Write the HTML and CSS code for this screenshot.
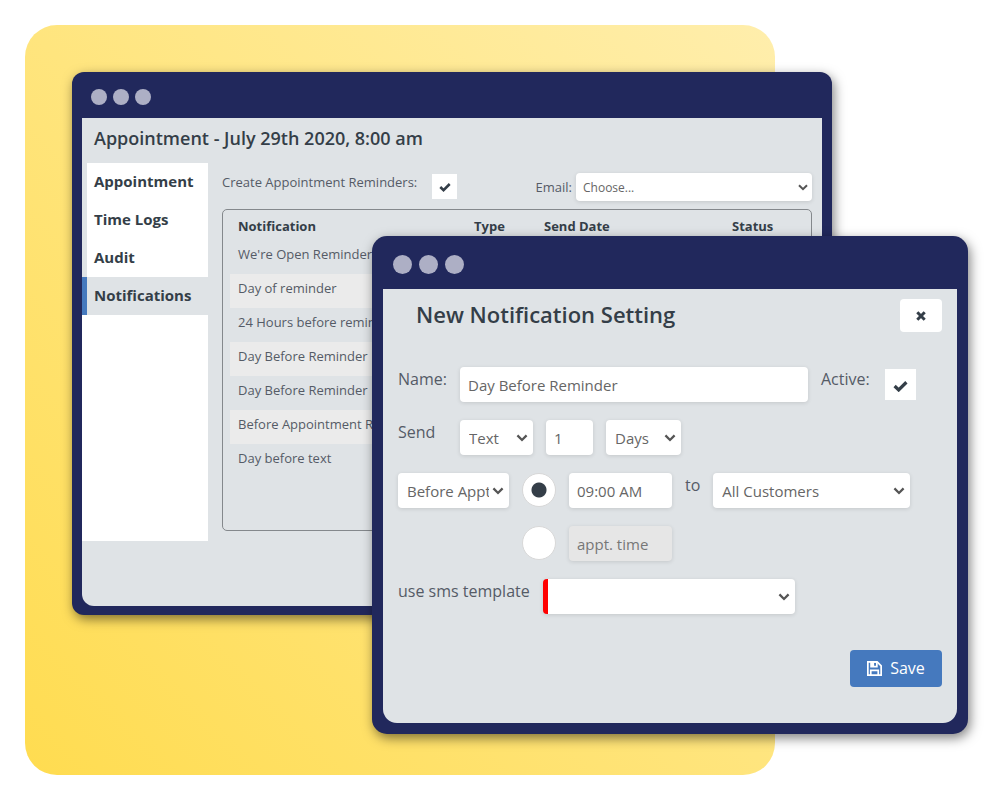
FILE: index.html
```html
<!DOCTYPE html>
<html lang="en">
<head>
  <meta charset="UTF-8">
  <title>Appointment Notifications</title>
  <meta name="viewport" content="width=device-width, initial-scale=1.0">
  <link rel="stylesheet" href="styles.css">
</head>
<body>
  <svg width="0" height="0" class="icon-defs" aria-hidden="true">
    <symbol id="chevron" viewBox="0 0 10 7"><path d="M1 1.2l4 4 4-4" fill="none" stroke="currentColor" stroke-width="2"/></symbol>
    <symbol id="check" viewBox="0 0 14 11"><path d="M1.5 5.5l3.8 3.7L12.5 2" fill="none" stroke="currentColor" stroke-width="3"/></symbol>
    <symbol id="times" viewBox="0 0 10 10"><path d="M1.3 1.3l7.4 7.4M8.7 1.3L1.3 8.7" fill="none" stroke="currentColor" stroke-width="3"/></symbol>
    <symbol id="floppy" viewBox="0 0 14 14">
      <path d="M.8.8h8.700l3.700 3.700v8.700H.8zM3.500 13V8.800h7V13" fill="none" stroke="currentColor" stroke-width="1.6"/>
      <path d="M3 1h7v5H3zM6.600 1.600v2.900h1.800V1.600z" fill="currentColor" fill-rule="evenodd"/>
    </symbol>
  </svg>

  <main class="stage">
    <div class="backdrop"></div>

    <section class="window window-back">
      <div class="window-bar"><span></span><span></span><span></span></div>
      <div class="window-body">
        <h1>Appointment - July 29th 2020, 8:00 am</h1>
        <div class="columns">
          <nav class="tabs">
            <a href="#appointment">Appointment</a>
            <a href="#timelogs">Time Logs</a>
            <a href="#audit">Audit</a>
            <a href="#notifications" class="active">Notifications</a>
            <div class="tabs-fill"></div>
          </nav>
          <div class="content">
            <div class="toolbar">
              <label for="createReminders">Create Appointment Reminders:</label>
              <span class="tick tick-small">
                <input type="checkbox" id="createReminders" checked>
                <svg><use href="#check"/></svg>
              </span>
              <label for="email" class="email-label">Email:</label>
              <span class="select select-email">
                <select id="email"><option>Choose...</option></select>
                <svg><use href="#chevron"/></svg>
              </span>
            </div>
            <div class="table-box">
              <table>
                <thead>
                  <tr><th class="col-name">Notification</th><th class="col-type">Type</th><th class="col-date">Send Date</th><th>Status</th></tr>
                </thead>
                <tbody>
                  <tr><td>We're Open Reminder</td><td></td><td></td><td></td></tr>
                  <tr><td>Day of reminder</td><td></td><td></td><td></td></tr>
                  <tr><td>24 Hours before reminder</td><td></td><td></td><td></td></tr>
                  <tr><td>Day Before Reminder</td><td></td><td></td><td></td></tr>
                  <tr><td>Day Before Reminder</td><td></td><td></td><td></td></tr>
                  <tr><td>Before Appointment R...</td><td></td><td></td><td></td></tr>
                  <tr><td>Day before text</td><td></td><td></td><td></td></tr>
                </tbody>
              </table>
            </div>
          </div>
        </div>
      </div>
    </section>

    <section class="window window-front">
      <div class="window-bar"><span></span><span></span><span></span></div>
      <form class="window-body">
        <div class="dialog-head">
          <h2>New Notification Setting</h2>
          <button type="button" class="close" aria-label="Close"><svg><use href="#times"/></svg></button>
        </div>
        <div class="row row-name">
          <label for="name">Name:</label>
          <input type="text" id="name" class="field grow" value="Day Before Reminder">
          <label for="active">Active:</label>
          <span class="tick">
            <input type="checkbox" id="active" checked>
            <svg><use href="#check"/></svg>
          </span>
        </div>
        <div class="row">
          <label for="sendType">Send</label>
          <span class="select select-type">
            <select id="sendType"><option>Text</option></select>
            <svg><use href="#chevron"/></svg>
          </span>
          <input type="text" class="field count" value="1" aria-label="Amount">
          <span class="select select-unit">
            <select aria-label="Unit"><option>Days</option></select>
            <svg><use href="#chevron"/></svg>
          </span>
        </div>
        <div class="row">
          <span class="select select-when">
            <select aria-label="When"><option>Before Appt</option></select>
            <svg><use href="#chevron"/></svg>
          </span>
          <input type="radio" name="at" aria-label="At a set time" checked>
          <input type="text" class="field time" value="09:00 AM" aria-label="Time">
          <label for="audience">to</label>
          <span class="select select-audience">
            <select id="audience"><option>All Customers</option></select>
            <svg><use href="#chevron"/></svg>
          </span>
        </div>
        <div class="row row-appt">
          <input type="radio" name="at" aria-label="At appointment time">
          <input type="text" class="field time" value="appt. time" aria-label="Appointment time" disabled>
        </div>
        <div class="row">
          <label for="template">use sms template</label>
          <span class="select select-template">
            <select id="template"><option></option></select>
            <svg><use href="#chevron"/></svg>
          </span>
        </div>
        <div class="dialog-foot">
          <button type="button" class="save"><svg><use href="#floppy"/></svg>Save</button>
        </div>
      </form>
    </section>
  </main>
</body>
</html>
```

FILE: styles.css
```css
* { box-sizing: border-box; }
body { margin: 0; background: #fff; color: #343e48; font-family: "Open Sans", sans-serif; font-size: 16px; }
h1, h2 { margin: 0; font-weight: 600; }
input, select, button { margin: 0; border: 0; font-family: inherit; font-size: inherit; }
.icon-defs { position: absolute; }

.stage { position: relative; min-width: 900px; min-height: 800px; }
.backdrop {
  position: absolute;
  top: 25px;
  left: 25px;
  right: 225px;
  height: 750px;
  border-radius: 32px;
  background: linear-gradient(45deg, #ffdc50, #ffeeac);
}

/* windows */
.window { position: absolute; background: #21285c; box-shadow: 2px 4px 12px rgba(0,0,0,0.5); }
.window-back { top: 72px; left: 72px; right: 168px; padding: 0 10px 9px; border-radius: 12px; }
.window-front { top: 236px; left: 372px; right: 32px; padding: 0 11px 11px; border-radius: 15px; }
.window-bar { display: flex; align-items: center; }
.window-bar span { border-radius: 50%; background: #adafc5; }
.window-back .window-bar { height: 46px; padding: 4px 9px 0; gap: 6px; }
.window-back .window-bar span { width: 16px; height: 16px; }
.window-front .window-bar { height: 53px; padding: 4px 10px 0; gap: 7px; }
.window-front .window-bar span { width: 19px; height: 19px; }
.window-body { background: #dfe3e6; }
.window-back .window-body { padding-bottom: 65px; border-radius: 0 0 12px 12px; }
.window-front .window-body { padding: 10px 15px 36px; border-radius: 0 0 14px 14px; }

/* appointment */
h1 { padding-left: 12px; font-size: 18px; line-height: 40px; margin-bottom: 5px; }
.columns { display: flex; }
.tabs { display: flex; flex-direction: column; width: 126px; }
.tabs a {
  height: 38px;
  padding-left: 7px;
  border-left: 5px solid #dfe3e6;
  background: #fff;
  color: inherit;
  font-size: 15px;
  font-weight: 700;
  line-height: 36px;
  text-decoration: none;
}
.tabs a.active { border-color: #4579be; background: #dfe3e6; }
.tabs-fill { flex: 1; background: #fff; }
.content { flex: 1; padding: 10px 10px 10px 14px; font-size: 13px; color: #555b66; }
.toolbar { display: flex; align-items: flex-start; height: 36px; line-height: 19px; }
.email-label { margin-left: auto; padding: 5px 4px 0 0; }
.table-box { height: 322px; padding: 4px 6px 0 7px; border: 1px solid #84888c; border-radius: 5px; }
table { width: 100%; border-collapse: collapse; table-layout: fixed; white-space: nowrap; }
th, td { height: 34px; padding: 0 0 6px 8px; text-align: left; }
th { height: 26px; padding-bottom: 2px; color: #343e48; font-weight: 700; }
.col-name { width: 236px; }
.col-type { width: 70px; }
.col-date { width: 188px; }
tbody tr:nth-child(even) { background: #ebebeb; }

/* controls */
.select { position: relative; display: block; }
select {
  display: block;
  width: 100%;
  height: 35px;
  padding: 1px 20px 0 9px;
  border-radius: 4px;
  background: #fff;
  color: #666;
  appearance: none;
  box-shadow: 0 1px 4px rgba(0,0,0,0.12);
}
.select svg { position: absolute; top: 14px; right: 5px; width: 12px; height: 8px; color: #555; pointer-events: none; }
.select-email { width: 236px; }
.select-email select { height: 28px; padding-left: 7px; font-size: 12px; }
.select-email svg { top: 11px; right: 4px; width: 10px; height: 7px; }
.field { width: 100%; height: 35px; padding: 1px 8px 0; border-radius: 4px; background: #fff; color: #666; box-shadow: 0 1px 4px rgba(0,0,0,0.12); }
.field:disabled { background: #e6e6e6; color: #777; }
.tick { position: relative; width: 31px; height: 31px; }
.tick input { display: block; width: 100%; height: 100%; background: #fff; appearance: none; }
.tick svg { position: absolute; top: 11px; left: 8px; width: 15px; height: 12px; color: #343e48; pointer-events: none; }
.tick-small { width: 25px; height: 25px; margin: 1px 0 0 15px; }
.tick-small svg { top: 8px; left: 7px; width: 12px; height: 10px; }
input[type="radio"] {
  flex: none;
  width: 34px;
  height: 34px;
  border: 1px solid #d8d8d8;
  border-radius: 50%;
  background: #fff;
  appearance: none;
}
input[type="radio"]:checked { background: radial-gradient(circle, #343e48 7px, #fff 8px); }

/* dialog */
.dialog-head { display: flex; align-items: flex-start; justify-content: space-between; padding-left: 18px; margin-bottom: 35px; }
h2 { font-size: 22px; line-height: 30px; }
.close { width: 42px; height: 33px; padding: 0; border-radius: 4px; background: #fff; color: #343e48; }
.close svg { display: block; width: 10px; height: 10px; margin: 0 auto; }
.row { display: flex; align-items: flex-start; gap: 13px; margin-bottom: 18px; }
.row label { min-width: 49px; color: #555b66; line-height: 24px; white-space: nowrap; }
.row select, .row .field { font-size: 15px; }
.row-name { padding-right: 26px; }
.row-name .tick { flex: none; margin: 2px 0 0 2px; }
.grow { flex: 1; }
.select-type { width: 73px; }
.row .count { width: 47px; }
.select-unit { width: 75px; }
.select-when { width: 111px; }
.row .time { width: 103px; }
.row label[for="audience"] { min-width: 0; }
.select-audience { width: 197px; }
.row-appt { padding-left: 124px; }
.select-template { width: 252px; }
.select-template select { border-left: 5px solid #f00; }
.dialog-foot { display: flex; justify-content: flex-end; margin-top: 36px; }
.save { display: flex; align-items: center; justify-content: center; gap: 8px; width: 92px; height: 37px; padding: 0 0 1px; border-radius: 4px; background: #4579be; color: #fff; }
.save svg { width: 15px; height: 15px; }
```
